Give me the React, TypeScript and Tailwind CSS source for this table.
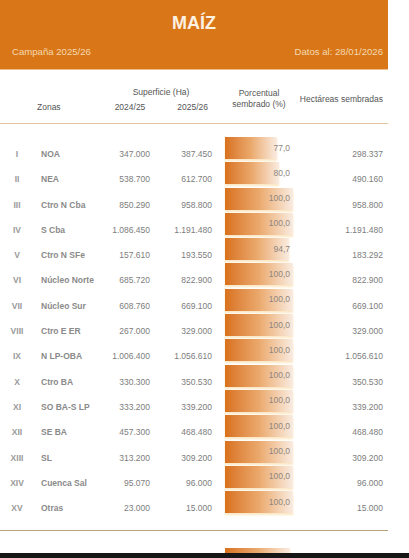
import React from 'react';

type Zona = { num: string; name: string; prev: string; curr: string; pct: number; ha: string };

const zonas: Zona[] = [
    { num: 'I', name: 'NOA', prev: '347.000', curr: '387.450', pct: 77.0, ha: '298.337' },
    { num: 'II', name: 'NEA', prev: '538.700', curr: '612.700', pct: 80.0, ha: '490.160' },
    { num: 'III', name: 'Ctro N Cba', prev: '850.290', curr: '958.800', pct: 100, ha: '958.800' },
    { num: 'IV', name: 'S Cba', prev: '1.086.450', curr: '1.191.480', pct: 100, ha: '1.191.480' },
    { num: 'V', name: 'Ctro N SFe', prev: '157.610', curr: '193.550', pct: 94.7, ha: '183.292' },
    { num: 'VI', name: 'Núcleo Norte', prev: '685.720', curr: '822.900', pct: 100, ha: '822.900' },
    { num: 'VII', name: 'Núcleo Sur', prev: '608.760', curr: '669.100', pct: 100, ha: '669.100' },
    { num: 'VIII', name: 'Ctro E ER', prev: '267.000', curr: '329.000', pct: 100, ha: '329.000' },
    { num: 'IX', name: 'N LP-OBA', prev: '1.006.400', curr: '1.056.610', pct: 100, ha: '1.056.610' },
    { num: 'X', name: 'Ctro BA', prev: '330.300', curr: '350.530', pct: 100, ha: '350.530' },
    { num: 'XI', name: 'SO BA-S LP', prev: '333.200', curr: '339.200', pct: 100, ha: '339.200' },
    { num: 'XII', name: 'SE BA', prev: '457.300', curr: '468.480', pct: 100, ha: '468.480' },
    { num: 'XIII', name: 'SL', prev: '313.200', curr: '309.200', pct: 100, ha: '309.200' },
    { num: 'XIV', name: 'Cuenca Sal', prev: '95.070', curr: '96.000', pct: 100, ha: '96.000' },
    { num: 'XV', name: 'Otras', prev: '23.000', curr: '15.000', pct: 100, ha: '15.000' },
];

const fmtPct = (p: number) => p.toFixed(1).replace('.', ',');

function Bar({ pct, label }: { pct: number; label?: string }) {
    return (
        <div className="relative w-[68px] h-[22px]">
            <div
                className="h-full bg-linear-to-r from-[#d8711a] via-[#eaa96c] to-[#f9ece1] shadow-[0_2px_2px_#fce6c4]"
                style={{ width: `${pct}%` }}
            />
            {label && (
                <span className="absolute right-[3px] top-0 h-full flex items-center text-[8.5px] text-[#8f867e]">
                    {label}
                </span>
            )}
        </div>
    );
}

export default function App() {
    return (
        <div className="h-[558px] flex flex-col bg-white font-['Liberation_Sans',Arial,sans-serif]">
            <div className="flex-1 overflow-hidden">
                <div className="w-[388px]">
                    {/* Header */}
                    <div className="h-[70px] bg-[#d97617] border-b border-[#eebf8c] flex flex-col pt-[12px] px-[12px]">
                        <h1 className="text-center text-[18px] leading-[22px] font-bold text-[#fdf1e2]">MAÍZ</h1>
                        <div className="flex justify-between mt-[12px] text-[9.6px] leading-[12px] text-[#f4d9b2]">
                            <span>Campaña 2025/26</span>
                            <span className="mr-[-7px]">Datos al: 28/01/2026</span>
                        </div>
                    </div>

                    {/* Table head */}
                    <div className="h-[54px] flex border-b border-[#e3c49b] text-[8.5px] leading-[11px] text-[#555555]">
                        <div className="w-[34px]" />
                        <div className="w-[76px] pt-[32px] pl-[3px]">Zonas</div>
                        <div className="w-[102px] pt-[17px] flex flex-col">
                            <div className="text-center">Superficie (Ha)</div>
                            <div className="flex mt-[4px]">
                                <span className="w-[40px] text-center">2024/25</span>
                                <span className="w-[62px] text-right pr-[4px]">2025/26</span>
                            </div>
                        </div>
                        <div className="w-[13px]" />
                        <div className="w-[68px] pt-[18px] text-center whitespace-nowrap">
                            Porcentual
                            <br />
                            sembrado (%)
                        </div>
                        <div className="w-[90px] pt-[24px] text-right">Hectáreas sembradas</div>
                    </div>

                    {/* Rows */}
                    <div className="pt-[11px]">
                        {zonas.map(z => (
                            <div key={z.num} className="h-[25.3px] flex items-start text-[8.5px] leading-[11px] text-[#7d7d7d]">
                                <div className="w-[34px] pt-[14px] text-center font-bold text-[#9a9a9a]">{z.num}</div>
                                <div className="w-[76px] pt-[14px] pl-[7px] font-bold text-[#8a8a8a]">{z.name}</div>
                                <div className="w-[40px] pt-[14px] text-right">{z.prev}</div>
                                <div className="w-[62px] pt-[14px] text-right">{z.curr}</div>
                                <div className="w-[13px]" />
                                <div className="mt-[2px]">
                                    <Bar pct={z.pct} label={fmtPct(z.pct)} />
                                </div>
                                <div className="w-[90px] pt-[14px] text-right">{z.ha}</div>
                            </div>
                        ))}
                    </div>

                    <div className="mt-[16px] border-b border-[#b9a17b]" />

                    {/* Total */}
                    <div className="mt-[17px] pl-[225px]">
                        <Bar pct={96} />
                    </div>
                </div>
            </div>
            <div className="h-[5px] bg-[#161616]" />
        </div>
    );
}
